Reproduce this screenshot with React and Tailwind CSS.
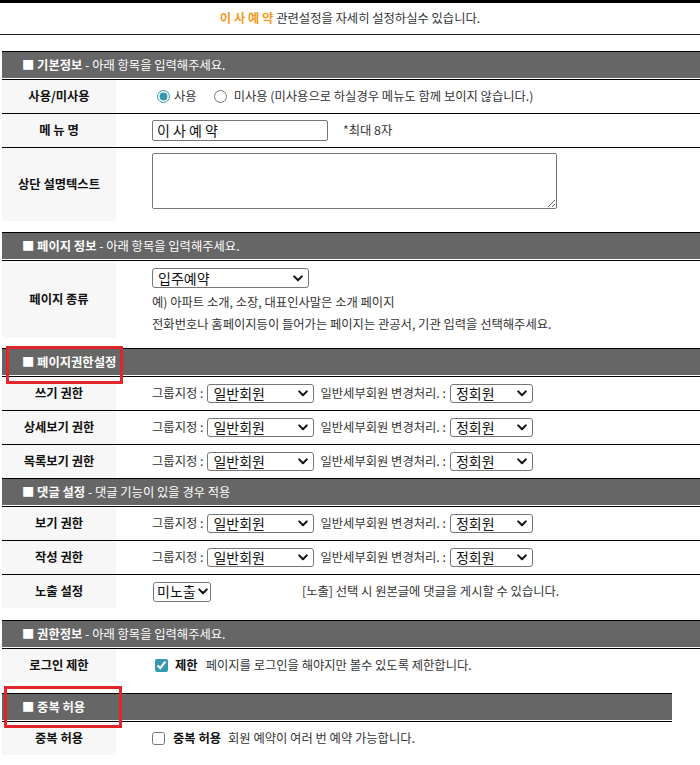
import React from "react";

function Chevron() {
  return (
    <svg width="10" height="7" viewBox="0 0 10 7" className="shrink-0">
      <path d="M1.2 1.4 L5 5.2 L8.8 1.4" fill="none" stroke="#111" strokeWidth="2" strokeLinecap="round" strokeLinejoin="round" />
    </svg>
  );
}

function FakeSelect({ className, text }) {
  return (
    <div className={"flex items-center justify-between whitespace-nowrap border border-[#767676] rounded-[3px] bg-white text-[14px] tracking-[0px] text-[#111] " + className}>
      <span className="leading-none pb-[1px]">{text}</span>
      <Chevron />
    </div>
  );
}

function Header({ title, sub, children }) {
  return (
    <div className="relative border-t border-black">
      <div className="h-[26px] bg-[#666666] flex items-center pl-[20px] text-white">
        <span className="font-bold">■ {title}</span>
        {sub && <span>&nbsp;- {sub}</span>}
      </div>
      <div className="h-[1px]" />
      {children}
    </div>
  );
}

function Row({ label, className, children, inner }) {
  return (
    <div className={"flex border-t border-black " + className}>
      <div className="w-[114px] bg-[#f7f7f7] flex items-center justify-center font-bold text-[#111]">{label}</div>
      <div className={"flex-1 flex pl-[36px] text-[#333] " + (inner || "items-center")}>{children}</div>
    </div>
  );
}

function PermRow({ label }) {
  return (
    <Row label={label} className="h-[34px]">
      <span>그룹지정 :</span>
      <FakeSelect className="ml-[4px] w-[107px] h-[19px] pl-[5px] pr-[5px]" text="일반회원" />
      <span className="ml-[6px]">일반세부회원 변경처리. :</span>
      <FakeSelect className="ml-[4px] w-[83px] h-[19px] pl-[5px] pr-[5px]" text="정회원" />
    </Row>
  );
}

function RedBox({ className }) {
  return <div className={"absolute border-[3px] border-[#e0262b] pointer-events-none " + className} />;
}

export default function App() {
  return (
    <div className="w-[700px] h-[765px] overflow-hidden bg-white font-['Noto_Sans_CJK_KR','Noto_Sans',sans-serif] text-[12.3px] tracking-[0px] text-[#333]">
      <div className="border-t-[3px] border-black h-[35px] border-b border-b-[#222] flex items-center justify-center">
        <span>
          <span className="text-[#f39a1e] font-bold">이 사 예 약</span> 관련설정을 자세히 설정하실수 있습니다.
        </span>
      </div>

      {/* Section 1 */}
      <div className="ml-[2px] mt-[16px]">
        <Header title="기본정보" sub="아래 항목을 입력해주세요." />
        <Row label="사용/미사용" className="h-[34px]">
          <input type="radio" name="use" defaultChecked className="m-0 ml-[5px] w-[13px] h-[13px] accent-[#3597b0]" />
          <span className="ml-[4px]">사용</span>
          <input type="radio" name="use" className="m-0 ml-[17px] w-[13px] h-[13px] accent-[#3597b0]" />
          <span className="ml-[7px]">미사용 (미사용으로 하실경우 메뉴도 함께 보이지 않습니다.)</span>
        </Row>
        <Row label="메 뉴 명" className="h-[34px]">
          <input
            type="text"
            defaultValue="이 사 예 약"
            className="w-[176px] h-[21px] border border-[#767676] rounded-[2px] px-[4px] text-[14px] tracking-[0px] text-[#111] outline-none"
          />
          <span className="ml-[15px]">*최대 8자</span>
        </Row>
        <Row label="상단 설명텍스트" className="h-[74px]" inner="items-start pt-[5px]">
          <textarea className="w-[405px] h-[56px] border border-[#767676] rounded-[2px] bg-white" />
        </Row>
      </div>

      {/* Section 2 */}
      <div className="ml-[2px] mt-[11px]">
        <Header title="페이지 정보" sub="아래 항목을 입력해주세요." />
        <Row label="페이지 종류" className="h-[78px]" inner="flex-col justify-start pt-[7px]">
          <FakeSelect className="w-[157px] h-[20px] pl-[5px] pr-[5px]" text="입주예약" />
          <div className="mt-[3px] h-[22px] flex items-center">예) 아파트 소개, 소장, 대표인사말은 소개 페이지</div>
          <div className="h-[22px] flex items-center">전화번호나 홈페이지등이 들어가는 페이지는 관공서, 기관 입력을 선택해주세요.</div>
        </Row>
      </div>

      {/* Section 3 */}
      <div className="ml-[2px] mt-[10px]">
        <Header title="페이지권한설정">
          <RedBox className="left-[4px] top-[-3px] w-[117px] h-[38px]" />
        </Header>
        <PermRow label="쓰기 권한" />
        <PermRow label="상세보기 권한" />
        <PermRow label="목록보기 권한" />
        <Header title="댓글 설정" sub="댓글 기능이 있을 경우 적용" />
        <PermRow label="보기 권한" />
        <PermRow label="작성 권한" />
        <Row label="노출 설정" className="h-[34px]">
          <FakeSelect className="ml-[1px] w-[58px] h-[20px] pl-[3px] pr-[2px]" text="미노출" />
          <span className="ml-[91px]">[노출] 선택 시 원본글에 댓글을 게시할 수 있습니다.</span>
        </Row>
      </div>

      {/* Section 4 */}
      <div className="ml-[2px] mt-[12px]">
        <Header title="권한정보" sub="아래 항목을 입력해주세요." />
        <Row label="로그인 제한" className="h-[34px]">
          <input type="checkbox" defaultChecked className="m-0 ml-[3px] w-[13px] h-[13px] accent-[#3597b0]" />
          <span className="ml-[7px] font-bold text-[#111]">제한</span>
          <span className="ml-[8px]">페이지를 로그인을 해야지만 볼수 있도록 제한합니다.</span>
        </Row>
      </div>

      {/* Section 5 */}
      <div className="ml-[2px] mt-[11px] w-[670px]">
        <Header title="중복 허용">
          <RedBox className="left-[2px] top-[-8px] w-[118px] h-[42px]" />
        </Header>
        <Row label="중복 허용" className="h-[34px]">
          <input type="checkbox" className="m-0 w-[13px] h-[13px] accent-[#3597b0]" />
          <span className="ml-[8px] font-bold text-[#111]">중복 허용</span>
          <span className="ml-[7px]">회원 예약이 여러 번 예약 가능합니다.</span>
        </Row>
      </div>
    </div>
  );
}
